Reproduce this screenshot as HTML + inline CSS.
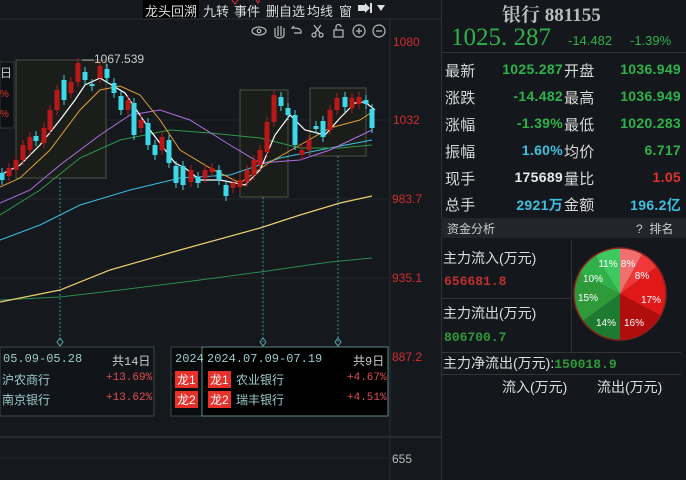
<!DOCTYPE html>
<html><head><meta charset="utf-8"><style>
body{margin:0;width:686px;height:480px;background:#15181d;overflow:hidden;font-family:"Liberation Sans","Noto Sans CJK SC",sans-serif;position:relative}
.a{position:absolute;white-space:nowrap}
.r{color:#e0322e}.g{color:#2fb24a}.c{color:#3ec0e0}.w{color:#e8e8e8}.gr{color:#c8c8c8}
.row{position:absolute;left:445px;width:236px;height:26px;font-size:14px;font-family:"Liberation Sans","Noto Sans CJK SC",sans-serif;font-weight:bold;letter-spacing:0.3px}
.row .l{position:absolute;left:0;top:-1px;color:#d8d8d8;font-weight:normal;font-size:15px;font-family:"Noto Sans CJK SC",sans-serif}
.row .v1{position:absolute;right:118px;top:0}
.row .l2{position:absolute;left:119px;top:-1px;color:#d8d8d8;font-weight:normal;font-size:15px;font-family:"Noto Sans CJK SC",sans-serif}
.row .v2{position:absolute;right:0;top:0}
.tb{font-size:13px;color:#ddd;top:1px}
.lbl{font-size:12px;font-family:"Liberation Mono","Noto Sans CJK SC",monospace}
.tag{background:#e8302a;color:#fff;font-size:12px;padding:0 2px}
</style></head><body>
<svg class="a" style="left:0;top:0" width="441" height="480">
<rect x="0" y="0" width="441" height="480" fill="#15181d"/>
<line x1="0" y1="19" x2="441" y2="19" stroke="#2a2e33"/>
<line x1="390" y1="19" x2="390" y2="480" stroke="#2a2e33"/>
<line x1="0" y1="437" x2="441" y2="437" stroke="#3a3e44"/>
<line x1="0" y1="120" x2="390" y2="120" stroke="#22262b"/>
<line x1="0" y1="199" x2="390" y2="199" stroke="#22262b"/>
<line x1="0" y1="278" x2="390" y2="278" stroke="#22262b"/>
<line x1="0" y1="458" x2="390" y2="458" stroke="#22262b"/>
<rect x="16" y="60" width="90" height="118" fill="#1a1d1a" stroke="#4d5248"/>
<rect x="240" y="90" width="48" height="107" fill="#1a1d1a" stroke="#4d5248"/>
<rect x="310" y="88" width="56" height="68" fill="#1a1d1a" stroke="#4d5248"/>
<g stroke="#3a8a9a" stroke-dasharray="2,2"><line x1="60" y1="178" x2="60" y2="342"/><line x1="263" y1="197" x2="263" y2="342"/><line x1="338" y1="156" x2="338" y2="342"/></g>
<g fill="none" stroke="#5aa" ><path d="M60 338l3 4-3 4-3-4z"/><path d="M263 338l3 4-3 4-3-4z"/><path d="M338 338l3 4-3 4-3-4z"/></g>
<polyline fill="none" stroke="#2e8a4e" stroke-width="1" points="0,300 60,297 120,290 200,280 260,272 330,262 372,258"/>
<polyline fill="none" stroke="#e8d070" stroke-width="1.2" points="0,302 60,290 110,270 180,250 260,228 300,215 340,203 372,196"/>
<polyline fill="none" stroke="#3ec0e0" stroke-width="1" points="0,240 40,225 80,205 130,190 180,178 230,175 280,158 330,148 372,140"/>
<polyline fill="none" stroke="#2f9a4a" stroke-width="1" points="0,215 40,190 80,158 120,140 170,130 210,133 260,138 300,148 340,148 372,145"/>
<polyline fill="none" stroke="#b070e0" stroke-width="1" points="0,203 30,190 60,165 100,135 130,115 160,110 190,120 230,145 260,163 300,160 330,150 372,130"/>
<polyline fill="none" stroke="#e0a030" stroke-width="1" points="0,187 20,178 50,150 80,110 100,90 120,86 140,95 160,120 180,150 210,168 240,183 270,162 300,145 330,128 360,120 372,112"/>
<polyline fill="none" stroke="#fff" stroke-width="1.2" points="0,175 20,165 40,145 60,120 75,100 85,85 100,78 110,84 125,93 150,130 175,163 185,168 200,180 220,180 245,185 260,170 275,135 290,115 305,130 325,135 340,118 355,103 365,102 375,110"/>
<g id="cd"></g>
<text x="82" y="63" fill="#ccc" font-size="12" font-family="Liberation Sans">—1067.539</text>
<rect x="0" y="62" width="14" height="66" fill="#0e1013" stroke="#333"/>
<text x="0" y="77" fill="#ccc" font-size="12" font-family="Noto Sans CJK SC">日</text>
<text x="0" y="97" fill="#e0322e" font-size="10">%</text>
<text x="0" y="117" fill="#e0322e" font-size="10">%</text>
<g font-family="Liberation Sans" font-size="12" fill="#d03030"><text x="393" y="46">1080</text><text x="393" y="124">1032</text><text x="392" y="203">983.7</text><text x="392" y="282">935.1</text><text x="392" y="361">887.2</text></g>
<text x="392" y="463" fill="#bbb" font-size="12" font-family="Liberation Sans">655</text>
<g fill="none" stroke="#bbb" stroke-width="1.2">
<ellipse cx="259" cy="31" rx="7" ry="4"/><circle cx="259" cy="31" r="1.8"/>
<path d="M275 36v-8M278 36v-10M281 36v-10M284 36v-8M275 36q4 4 9 0"/>
<path d="M294 28h-2l2-2M294 28q8 0 7 5h-7"/>
<circle cx="314" cy="35" r="2"/><circle cx="321" cy="35" r="2"/><path d="M315 33l6-8M320 33l-6-8"/>
<rect x="334" y="30" width="9" height="7"/><path d="M336 30v-3a2.5 2.5 0 0 1 5 0"/>
<circle cx="359" cy="31" r="6"/><path d="M356 31h6M359 28v6"/>
<circle cx="379" cy="31" r="6"/><path d="M376 31h6"/>
</g>
<rect x="143" y="0" width="56" height="18" fill="#000"/>
<path d="M358 5h7v-2l5 5-5 5v-2h-7z" fill="#ddd"/><rect x="370" y="3" width="2" height="10" fill="#ddd"/>
<path d="M377 5h8l-4 6z" fill="#ddd"/>
<path d="M232 0l3 4 3-4M256 0l2 3 2-3" stroke="#e03030" fill="none"/>
<rect x="0" y="347" width="154" height="69" fill="#111418" stroke="#3a4848"/>
<rect x="171" y="347" width="31" height="69" fill="#0a0c0e" stroke="#3a4848"/>
<rect x="202" y="347" width="186" height="69" fill="#000" stroke="#5a8a8a"/>
</svg>
<div class="a tb" style="left:145px">龙头回溯</div>
<div class="a tb" style="left:203px">九转</div>
<div class="a tb" style="left:234px">事件</div>
<div class="a tb" style="left:266px">删自选</div>
<div class="a tb" style="left:307px">均线</div>
<div class="a tb" style="left:339px">窗</div>
<div class="a lbl" style="left:3px;top:352px;color:#9cc">05.09-05.28</div>
<div class="a lbl" style="left:112px;top:352px;color:#ccc">共14日</div>
<div class="a" style="left:2px;top:371px;font-size:12px;color:#9cc">沪农商行</div>
<div class="a lbl" style="left:106px;top:372px;color:#e05050;font-size:11px">+13.69%</div>
<div class="a" style="left:2px;top:391px;font-size:12px;color:#9cc">南京银行</div>
<div class="a lbl" style="left:106px;top:392px;color:#e05050;font-size:11px">+13.62%</div>
<div class="a lbl" style="left:175px;top:352px;color:#9cc">2024</div>
<div class="a tag" style="left:175px;top:371px">龙1</div>
<div class="a tag" style="left:175px;top:391px">龙2</div>
<div class="a lbl" style="left:207px;top:352px;color:#9cc">2024.07.09-07.19</div>
<div class="a lbl" style="left:353px;top:352px;color:#ccc">共9日</div>
<div class="a tag" style="left:208px;top:371px">龙1</div>
<div class="a tag" style="left:208px;top:391px">龙2</div>
<div class="a" style="left:236px;top:371px;font-size:12px;color:#9cc">农业银行</div>
<div class="a" style="left:236px;top:391px;font-size:12px;color:#9cc">瑞丰银行</div>
<div class="a lbl" style="left:347px;top:372px;color:#e05050;font-size:11px">+4.67%</div>
<div class="a lbl" style="left:347px;top:392px;color:#e05050;font-size:11px">+4.51%</div>

<div class="a" style="left:441px;top:0;width:245px;height:480px;background:#14171c;border-left:1px solid #333"></div>
<div class="a" style="left:441px;top:52px;width:245px;height:1px;background:#333"></div>
<div class="a" style="left:502px;top:0;font-size:19px;font-weight:bold;color:#bbb;font-family:'Liberation Serif','Noto Serif CJK SC',serif">银行 881155</div>
<div class="a g" style="left:451px;top:24px;font-size:25px;font-family:'Liberation Serif',serif">1025. 287</div>
<div class="a g" style="left:568px;top:33px;font-size:13px;font-family:'Liberation Sans',sans-serif">-14.482</div>
<div class="a g" style="left:630px;top:33px;font-size:13px;font-family:'Liberation Sans',sans-serif">-1.39%</div>
<div class="row" style="top:61px"><span class="l">最新</span><span class="v1 g">1025.287</span><span class="l2">开盘</span><span class="v2 g">1036.949</span></div>
<div class="row" style="top:88px"><span class="l">涨跌</span><span class="v1 g">-14.482</span><span class="l2">最高</span><span class="v2 g">1036.949</span></div>
<div class="row" style="top:115px"><span class="l">涨幅</span><span class="v1 g">-1.39%</span><span class="l2">最低</span><span class="v2 g">1020.283</span></div>
<div class="row" style="top:142px"><span class="l">振幅</span><span class="v1 c">1.60%</span><span class="l2">均价</span><span class="v2 g">6.717</span></div>
<div class="row" style="top:169px"><span class="l">现手</span><span class="v1 w">175689</span><span class="l2">量比</span><span class="v2 r">1.05</span></div>
<div class="row" style="top:195px"><span class="l">总手</span><span class="v1 c">2921万</span><span class="l2">金额</span><span class="v2 c">196.2亿</span></div>
<div class="a" style="left:441px;top:218px;width:245px;height:20px;background:#22262b"></div>
<div class="a" style="left:447px;top:220px;font-size:12px;color:#ccc">资金分析</div>
<div class="a" style="left:636px;top:220px;font-size:12px;color:#ccc">?&nbsp;&nbsp;排名</div>
<div class="a" style="left:441px;top:298px;width:130px;height:1px;background:#333"></div>
<div class="a" style="left:571px;top:240px;width:1px;height:112px;background:#333"></div>
<div class="a" style="left:441px;top:352px;width:240px;height:1px;background:#333"></div>
<div class="a" style="left:441px;top:374px;width:240px;height:1px;background:#333"></div>
<div class="a" style="left:443px;top:248px;font-size:14px;color:#ddd">主力流入(万元)</div>
<div class="a" style="left:444px;top:274px;font-size:13px;font-weight:bold;color:#c03030;font-family:'Liberation Mono',monospace">656681.8</div>
<div class="a" style="left:443px;top:303px;font-size:14px;color:#ddd">主力流出(万元)</div>
<div class="a" style="left:444px;top:330px;font-size:13px;font-weight:bold;color:#2f9a3a;font-family:'Liberation Mono',monospace">806700.7</div>
<div class="a" style="left:443px;top:353px;font-size:14px;color:#ddd">主力净流出(万元):<span style="color:#2f9a3a;font-weight:bold;font-family:'Liberation Mono',monospace;font-size:13px">150018.9</span></div>
<div class="a" style="left:502px;top:377px;font-size:14px;color:#ddd">流入(万元)</div>
<div class="a" style="left:597px;top:377px;font-size:14px;color:#ddd">流出(万元)</div>
<svg class="a" style="left:570px;top:244px" width="100" height="100" viewBox="-50 -50 100 100">
<path d="M0 0L0 -46A46 46 0 0 1 22.4 -40.2Z" fill="#f07070"/>
<path d="M0 0L22.4 -40.2A46 46 0 0 1 37 -27.3Z" fill="#f03838"/>
<path d="M0 0L37 -27.3A46 46 0 0 1 40.6 21.6Z" fill="#e01818"/>
<path d="M0 0L40.6 21.6A46 46 0 0 1 0 46Z" fill="#b00e0e"/>
<path d="M0 0L0 46A46 46 0 0 1 -37.2 27Z" fill="#1e7a30"/>
<path d="M0 0L-37.2 27A46 46 0 0 1 -40.9 -21Z" fill="#2f9a3a"/>
<path d="M0 0L-40.9 -21A46 46 0 0 1 -24.7 -38.8Z" fill="#30b048"/>
<path d="M0 0L-24.7 -38.8A46 46 0 0 1 0 -46Z" fill="#40c860"/>
<circle r="46" fill="none" stroke="#8a2020" stroke-width="1.5"/>
<g font-size="10" fill="#fff" font-family="Liberation Sans" text-anchor="middle"><text x="8" y="-27">8%</text><text x="22" y="-15">8%</text><text x="31" y="9">17%</text><text x="14" y="32">16%</text><text x="-14" y="32">14%</text><text x="-32" y="7">15%</text><text x="-27" y="-12">10%</text><text x="-12" y="-27">11%</text></g>
</svg>
<script>
var d=[[2,173,180,0],[9,168,176,1],[16,160,170,1],[23,145,160,1],[30,137,150,1],[36,136,141,0],[44,128,143,1],[50,110,130,1],[57,90,110,1],[64,80,100,0],[71,82,93,1],[78,63,82,1],[85,72,80,0],[92,84,86,0],[100,66,78,1],[107,69,78,0],[114,83,93,0],[121,96,110,0],[128,100,110,1],[134,103,135,0],[141,120,128,1],[148,123,145,0],[155,145,155,0],[162,137,150,1],[169,140,163,0],[176,166,183,0],[183,166,185,0],[191,170,182,1],[198,177,183,0],[205,170,178,1],[212,168,172,1],[219,170,180,0],[226,185,196,0],[233,183,188,1],[240,180,187,1],[247,170,182,1],[254,160,175,1],[260,150,165,1],[267,122,152,1],[274,95,122,1],[281,97,106,0],[288,108,115,0],[295,115,145,0],[302,150,155,1],[309,140,150,1],[316,126,129,0],[323,121,137,0],[330,110,130,1],[337,98,110,1],[345,97,107,0],[352,98,108,1],[359,97,104,1],[366,100,104,0],[372,109,128,0]];
var s='';d.forEach(function(c){var col=c[3]?'#b81818':'#3ed8e8';s+='<line x1="'+c[0]+'" y1="'+(c[1]-5)+'" x2="'+c[0]+'" y2="'+(c[2]+5)+'" stroke="'+col+'"/><rect x="'+(c[0]-2.5)+'" y="'+c[1]+'" width="5" height="'+(c[2]-c[1])+'" fill="'+col+'"/>';});
document.getElementById('cd').innerHTML=s;
</script>
</body></html>
